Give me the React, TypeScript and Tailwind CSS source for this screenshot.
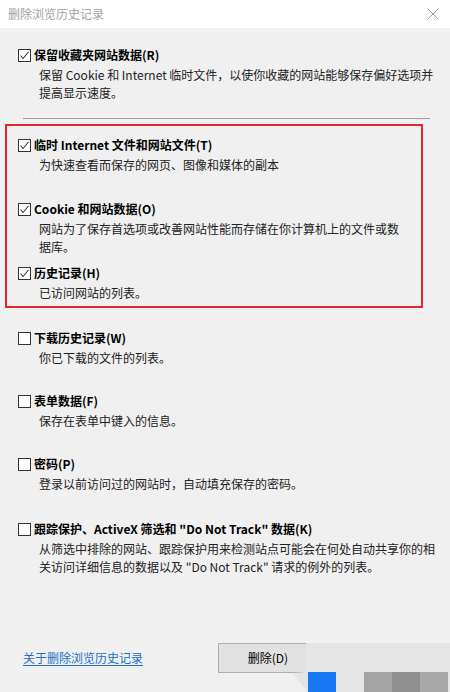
import React from "react";

const font = "font-['Noto_Sans_CJK_SC','Microsoft_YaHei',sans-serif]";

interface ItemProps {
  checked: boolean;
  title: string;
  lines: string[];
  className?: string;
}

const CheckBox: React.FC<{ checked: boolean }> = ({ checked }) => (
  <div className="w-[13px] h-[13px] border border-[#333333] bg-white shrink-0 flex items-center justify-center">
    {checked && (
      <svg width="11" height="11" viewBox="0 0 11 11">
        <polyline
          points="1.5,5.5 4,8.5 9.5,2"
          fill="none"
          stroke="#333333"
          strokeWidth="1.1"
        />
      </svg>
    )}
  </div>
);

const Item: React.FC<ItemProps> = ({ checked, title, lines, className }) => (
  <div className={className}>
    <div className="h-5 flex items-center gap-[3px]">
      <CheckBox checked={checked} />
      <span className="text-[12px] font-bold text-black whitespace-nowrap">
        {title}
      </span>
    </div>
    <div className="mt-px pl-[21px] text-[12px] leading-[18px] text-[#222222] whitespace-nowrap">
      {lines.map((l, i) => (
        <div key={i}>{l}</div>
      ))}
    </div>
  </div>
);

const App: React.FC = () => {
  return (
    <div className={`w-[450px] h-[692px] bg-[#f0f0f0] relative overflow-hidden ${font}`}>
      {/* title bar */}
      <div className="h-[28px] bg-white flex items-center justify-between pl-2 pr-[11px]">
        <span className="text-[12px] text-[#a3a3a3]">删除浏览历史记录</span>
        <svg width="12" height="12" viewBox="0 0 12 12">
          <path d="M0.5 0.5 L11.5 11.5 M11.5 0.5 L0.5 11.5" stroke="#9a9a9a" strokeWidth="1" />
        </svg>
      </div>

      <div className="pt-[17px] pl-[18px]">
        <Item
          checked
          title="保留收藏夹网站数据(R)"
          lines={[
            "保留 Cookie 和 Internet 临时文件，以使你收藏的网站能够保存偏好选项并",
            "提高显示速度。",
          ]}
        />
      </div>

      <div className="mt-[16px] ml-[23px] w-[407px] h-px bg-[#a0a0a0]" />

      <div className="mt-[5px] ml-[5px] w-[418px] h-[184px] border-2 border-[#e3262d] pt-[9px] pl-[11px]">
        <Item
          checked
          className="h-[64px]"
          title="临时 Internet 文件和网站文件(T)"
          lines={["为快速查看而保存的网页、图像和媒体的副本"]}
        />
        <Item
          checked
          className="h-[64px]"
          title="Cookie 和网站数据(O)"
          lines={[
            "网站为了保存首选项或改善网站性能而存储在你计算机上的文件或数",
            "据库。",
          ]}
        />
        <Item checked title="历史记录(H)" lines={["已访问网站的列表。"]} />
      </div>

      <div className="mt-[20px] pl-[18px]">
        <Item
          checked={false}
          className="h-[63px]"
          title="下载历史记录(W)"
          lines={["你已下载的文件的列表。"]}
        />
        <Item
          checked={false}
          className="h-[63px]"
          title="表单数据(F)"
          lines={["保存在表单中键入的信息。"]}
        />
        <Item
          checked={false}
          className="h-[65px]"
          title="密码(P)"
          lines={["登录以前访问过的网站时，自动填充保存的密码。"]}
        />
        <Item
          checked={false}
          title={'跟踪保护、ActiveX 筛选和 "Do Not Track" 数据(K)'}
          lines={[
            "从筛选中排除的网站、跟踪保护用来检测站点可能会在何处自动共享你的相",
            '关访问详细信息的数据以及 "Do Not Track" 请求的例外的列表。',
          ]}
        />
      </div>

      {/* bottom row */}
      <div className="absolute left-0 top-[643px] w-full h-[30px] flex items-center pl-[23px]">
        <span className="w-[195px] text-[12px] text-[#1f6fc5] underline underline-offset-2">
          关于删除浏览历史记录
        </span>
        <button className="w-[100px] h-[30px] bg-[#e1e1e1] border border-[#adadad] text-[12px] text-black">
          删除(D)
        </button>
      </div>

      {/* screenshot artifact over the corner */}
      <svg
        className="absolute left-[290px] top-[643px]"
        width="160"
        height="49"
        viewBox="0 0 160 49"
      >
        <polygon points="16,0 160,0 160,49 17,49 3,30 16,29" fill="#e5e5e5" />
        <rect x="18" y="29" width="28" height="20" fill="#1877f2" />
        <rect x="74" y="29" width="28" height="20" fill="#a3a3a3" />
        <rect x="102" y="29" width="28" height="20" fill="#8e8e8e" />
        <rect x="130" y="29" width="28" height="20" fill="#a8a8a8" />
      </svg>
    </div>
  );
};

export default App;
